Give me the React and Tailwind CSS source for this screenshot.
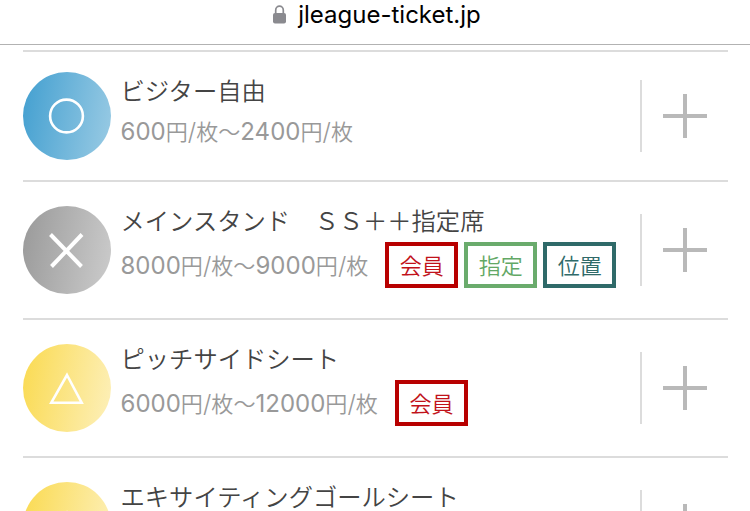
import React from "react";

const badgeStyles = {
  会員: "border-[#b80000] text-[#c1121a]",
  指定: "border-[#6aab6c] text-[#62a865]",
  位置: "border-[#2f6a69] text-[#2f6a69]",
};

const seats = [
  { name: "ビジター自由", min: 600, max: 2400, mark: "circle", badges: [] },
  { name: "メインスタンド　ＳＳ＋＋指定席", min: 8000, max: 9000, mark: "cross", badges: ["会員", "指定", "位置"] },
  { name: "ピッチサイドシート", min: 6000, max: 12000, mark: "triangle", badges: ["会員"] },
  { name: "エキサイティングゴールシート", mark: "triangle", badges: [] },
];

const markColors = {
  circle: "from-[#429fd0] to-[#9acbe4]",
  cross: "from-[#999999] to-[#cccccc]",
  triangle: "from-[#fada50] to-[#fdf0bb]",
};

const Mark = ({ type }) => (
  <div className={`h-22 w-22 shrink-0 rounded-full bg-linear-[100deg] ${markColors[type]}`}>
    <svg viewBox="0 0 88 88" className="h-22 w-22" fill="none" stroke="white">
      {type === "circle" && <circle cx="43.5" cy="44" r="16.4" strokeWidth="2.6" />}
      {type === "cross" && <path d="M27.5 28.5 L58.5 60.5 M59 28.5 L28.5 60.5" strokeWidth="4" />}
      {type === "triangle" && <path d="M44 31 L58.7 58.7 L28.3 58.7 Z" strokeWidth="2.6" />}
    </svg>
  </div>
);

const Digits = ({ children }) => (
  <span className="font-['Inter'] text-[24px] font-normal">{children}</span>
);

const Unit = () => (
  <>
    円<span className="font-['Inter'] text-[24px]">/</span>枚
  </>
);

const SeatRow = ({ seat, first }) => (
  <li className={`flex shrink-0 items-center border-b-2 border-[#dcdcdc] ${first ? "h-[130px]" : "h-[138px]"}`}>
    <Mark type={seat.mark} />
    <div className={`flex flex-1 flex-col pb-3 pl-[10px] ${first ? "gap-[1px]" : "gap-0"}`}>
      <h2 className="h-[42px] whitespace-nowrap text-[24.3px] leading-[44px] text-[#444444]">{seat.name}</h2>
      <div className={`flex items-center ${first ? "h-10" : "h-12"}`}>
        {seat.min && (
          <p className={`whitespace-nowrap text-[22.1px] leading-[40px] text-[#999999] ${first ? "" : "pt-[2px]"}`}>
            <Digits>{seat.min}</Digits>
            <Unit />〜<Digits>{seat.max}</Digits>
            <Unit />
          </p>
        )}
        <div className="ml-[17px] flex gap-[6px]">
          {seat.badges.map((badge) => (
            <span
              key={badge}
              className={`flex h-[46px] w-[73px] items-center justify-center border-4 pt-px text-[22px] leading-none ${badgeStyles[badge]}`}
            >
              {badge}
            </span>
          ))}
        </div>
      </div>
    </div>
    <button aria-label={seat.name} className="flex h-18 w-22 items-center border-l-2 border-[#dcdcdc] pl-[21px]">
      <svg viewBox="0 0 44 44" className="h-11 w-11" stroke="#b9b9b9" strokeWidth="4">
        <path d="M22 0V44M0 22H44" />
      </svg>
    </button>
  </li>
);

export default function App() {
  return (
    <div className="flex h-screen flex-col overflow-hidden bg-white font-['Inter','Noto_Sans_CJK_JP',sans-serif] font-[350]">
      <header className="flex h-[45px] shrink-0 justify-center border-b border-[#b2b2b2]">
        <div className="flex h-[30px] items-center gap-[12px] pl-[4px]">
          <svg viewBox="0 0 13 19" className="mb-[2px] h-[19px] w-[13px]" fill="none">
            <path d="M2.7 9V5.2a3.8 4 0 0 1 7.6 0V9" stroke="#8a8a8f" strokeWidth="1.7" />
            <rect x="0" y="8" width="13" height="10.5" rx="2" fill="#8a8a8f" />
          </svg>
          <span className="text-[24px] font-normal text-black">jleague-ticket.jp</span>
        </div>
      </header>
      <ul className="mx-auto mt-[5px] flex w-[705px] flex-col border-t-2 border-[#dcdcdc]">
        {seats.map((seat, i) => (
          <SeatRow key={seat.name} seat={seat} first={i === 0} />
        ))}
      </ul>
    </div>
  );
}
